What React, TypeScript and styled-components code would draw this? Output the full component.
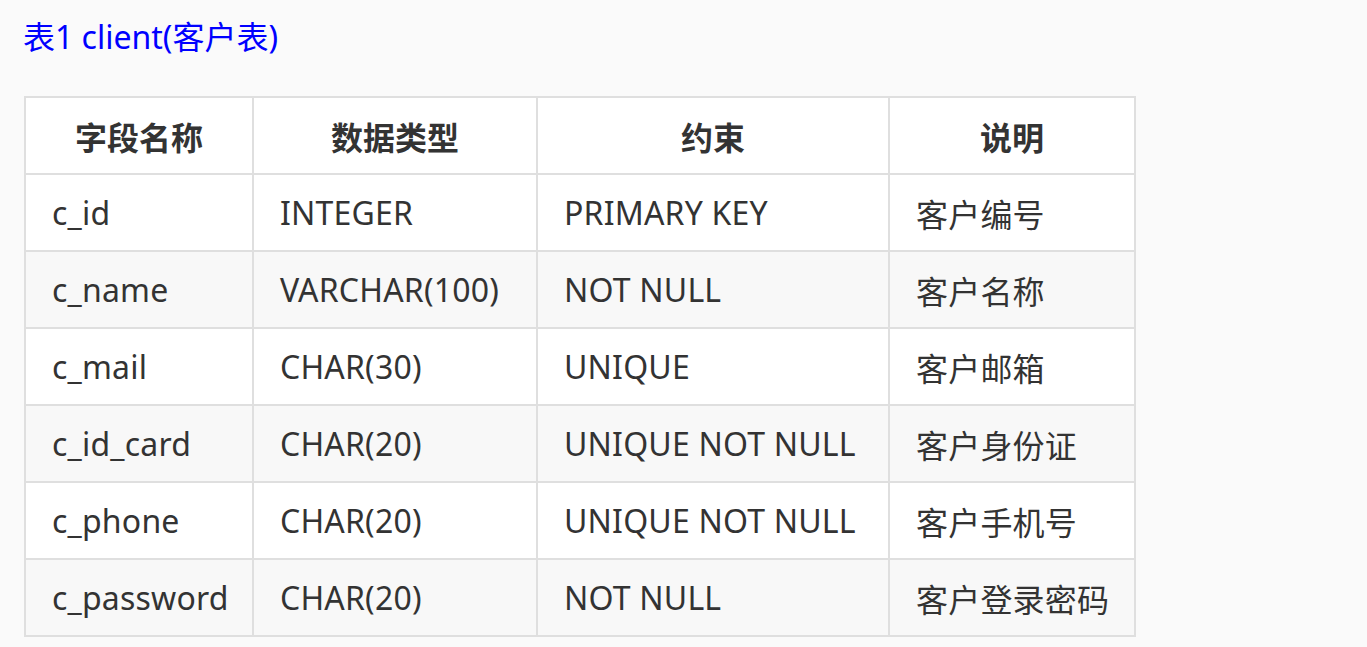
import styled, { createGlobalStyle } from "styled-components";

const GlobalStyle = createGlobalStyle`
    html, body {
        margin: 0;
        padding: 0;
        background: #fafafa;
    }
    body {
        font-family: "Noto Sans", "Noto Sans CJK SC", sans-serif;
        color: #333333;
    }
`

const Page = styled.div`
    padding: 16px 24px;
`

const Caption = styled.div`
    color: #0000ff;
    font-size: 32px;
    line-height: 42px;
    margin-left: -1px;
    margin-bottom: 38px;
`

const Table = styled.table`
    border-collapse: collapse;
    table-layout: fixed;
    width: 1110px;
    font-size: 32px;
`

const Row = styled.tr<{ $striped?: boolean }>`
    height: 77px;
    background: ${(p) => (p.$striped ? "#f8f8f8" : "#ffffff")};
`

const HeadCell = styled.th<{ $w: number }>`
    width: ${(p) => p.$w}px;
    box-sizing: border-box;
    border: 2px solid #dfdfdf;
    font-weight: 700;
    text-align: center;
    padding: 0;
`

const Cell = styled.td`
    border: 2px solid #dfdfdf;
    padding: 0 26px;
    white-space: nowrap;
    letter-spacing: 0.2px;
`

const columns = [
    { title: "字段名称", w: 228 },
    { title: "数据类型", w: 284 },
    { title: "约束", w: 352 },
    { title: "说明", w: 246 },
]

const rows = [
    ["c_id", "INTEGER", "PRIMARY KEY", "客户编号"],
    ["c_name", "VARCHAR(100)", "NOT NULL", "客户名称"],
    ["c_mail", "CHAR(30)", "UNIQUE", "客户邮箱"],
    ["c_id_card", "CHAR(20)", "UNIQUE NOT NULL", "客户身份证"],
    ["c_phone", "CHAR(20)", "UNIQUE NOT NULL", "客户手机号"],
    ["c_password", "CHAR(20)", "NOT NULL", "客户登录密码"],
]

const App = () => {
    return (
        <>
            <GlobalStyle />
            <Page>
                <Caption>表1 client(客户表)</Caption>
                <Table>
                    <thead>
                        <Row>
                            {columns.map((c) => (
                                <HeadCell key={c.title} $w={c.w}>{c.title}</HeadCell>
                            ))}
                        </Row>
                    </thead>
                    <tbody>
                        {rows.map((r, i) => (
                            <Row key={r[0]} $striped={i % 2 === 1}>
                                {r.map((v) => (
                                    <Cell key={v}>{v}</Cell>
                                ))}
                            </Row>
                        ))}
                    </tbody>
                </Table>
            </Page>
        </>
    );
};

export default App;
